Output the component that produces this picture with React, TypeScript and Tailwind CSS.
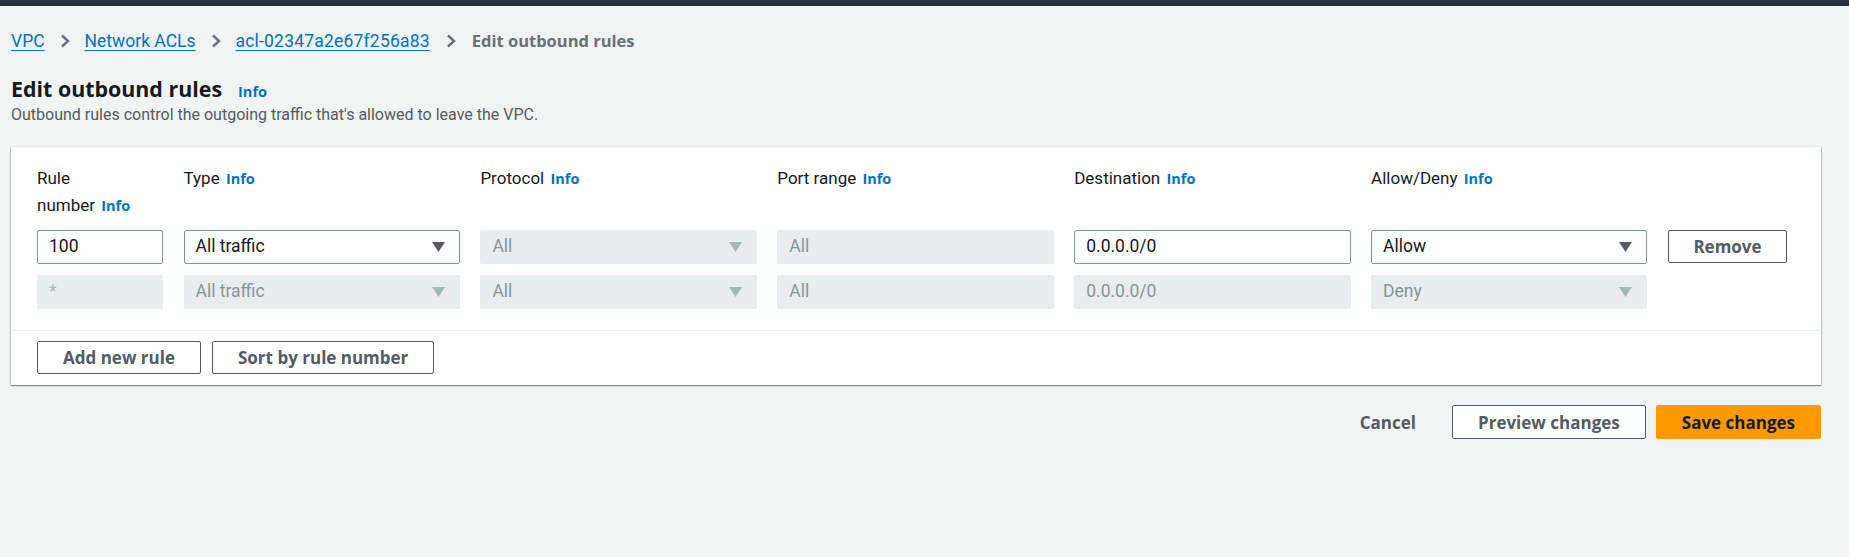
import React from "react";

const ROBOTO = "[font-family:Roboto,'Liberation_Sans',sans-serif]";

function Chevron({ className = "mx-[15px]" }: { className?: string }) {
  return (
    <svg width="10" height="14" viewBox="0 0 10 14" className={"shrink-0 " + className}>
      <path d="M2 1.5 L8 7 L2 12.5" fill="none" stroke="#687078" strokeWidth="2.4" strokeLinejoin="miter" />
    </svg>
  );
}

function Info({ className = "" }: { className?: string }) {
  return (
    <span className={"[font-family:'Open_Sans',sans-serif] font-bold text-[14.5px] text-[#0073bb] " + className}>
      Info
    </span>
  );
}

function Caret({ disabled }: { disabled?: boolean }) {
  return (
    <svg width="13" height="10" viewBox="0 0 13 10" className="shrink-0">
      <path d="M0 0 H13 L6.5 10 Z" fill={disabled ? "#aab7b8" : "#545b64"} />
    </svg>
  );
}

function Field({
  value,
  disabled,
  select,
  faint,
}: {
  value: string;
  disabled?: boolean;
  select?: boolean;
  faint?: boolean;
}) {
  return (
    <div
      className={
        "h-[34px] rounded-[2px] border flex items-center justify-between pl-[11px] pr-[14px] text-[17.5px] " +
        (disabled
          ? "bg-[#eaeded] border-[#eaeded] " + (faint ? "text-[#aab7b8]" : "text-[#879596]")
          : "bg-white border-[#879596] text-[#16191f]")
      }
    >
      <span className="leading-none">{value}</span>
      {select ? <Caret disabled={disabled} /> : null}
    </div>
  );
}

function Btn({ children, primary }: { children: React.ReactNode; primary?: boolean }) {
  return (
    <button
      className={
        "h-[33px] rounded-[2px] border px-[25px] [font-family:'Open_Sans',sans-serif] font-bold text-[17px] leading-none " +
        (primary
          ? "bg-[#ff9900] border-[#ff9900] text-[#16191f]"
          : "bg-white border-[#545b64] text-[#545b64]")
      }
    >
      {children}
    </button>
  );
}

function Label({ children }: { children: React.ReactNode }) {
  return <div className="text-[17px] leading-[27px] text-[#16191f]">{children}</div>;
}

export default function App() {
  return (
    <div className={"min-h-screen w-full bg-[#f2f3f3] " + ROBOTO}>
      <div className="h-[6px] bg-[#232f3e]" />
      <div className="pl-[11px] pr-[28px]">
        {/* Breadcrumb */}
        <nav className="mt-[23px] flex items-center h-[24px] text-[17.5px] leading-[24px]">
          <a className="text-[#0073bb] underline underline-offset-[3px] decoration-1">VPC</a>
          <Chevron />
          <a className="text-[#0073bb] underline underline-offset-[3px] decoration-1">Network ACLs</a>
          <Chevron />
          <a className="text-[#0073bb] underline underline-offset-[3px] decoration-1 tracking-[0.2px]">
            acl-02347a2e67f256a83
          </a>
          <Chevron className="ml-[16px] mr-[16px]" />
          <span className="[font-family:'Open_Sans',sans-serif] font-bold text-[16.5px] text-[#687078]">
            Edit outbound rules
          </span>
        </nav>

        {/* Header */}
        <div className="mt-[21px] flex items-baseline">
          <h1 className="[font-family:'Open_Sans',sans-serif] font-bold text-[21.4px] leading-[30px] text-[#16191f]">
            Edit outbound rules
          </h1>
          <Info className="ml-[16px]" />
        </div>
        <p className="mt-[1px] text-[16px] leading-[20px] text-[#545b64]">
          Outbound rules control the outgoing traffic that's allowed to leave the VPC.
        </p>

        {/* Card */}
        <div className="mt-[21px] bg-white border-t border-[#eaeded] shadow-[0_1px_1px_0_rgba(0,28,36,0.3),1px_1px_1px_0_rgba(0,28,36,0.15),-1px_1px_1px_0_rgba(0,28,36,0.15)]">
          <div className="pl-[26px] pr-[34px] pt-[18px] pb-[21px]">
            <div className="grid grid-cols-[126px_repeat(5,minmax(0,1fr))_119px] gap-x-[20.5px]">
              <Label>
                Rule
                <br />
                number <Info className="ml-[2px]" />
              </Label>
              <Label>
                Type <Info className="ml-[2px]" />
              </Label>
              <Label>
                Protocol <Info className="ml-[2px]" />
              </Label>
              <Label>
                Port range <Info className="ml-[2px]" />
              </Label>
              <Label>
                Destination <Info className="ml-[2px]" />
              </Label>
              <Label>
                Allow/Deny <Info className="ml-[2px]" />
              </Label>
              <div />
            </div>
            <div className="mt-[11px] grid grid-cols-[126px_repeat(5,minmax(0,1fr))_119px] gap-x-[20.5px] gap-y-[11px]">
              <Field value="100" />
              <Field value="All traffic" select />
              <Field value="All" select disabled />
              <Field value="All" disabled />
              <Field value="0.0.0.0/0" />
              <Field value="Allow" select />
              <div className="flex items-start">
                <button className="w-full h-[33px] rounded-[2px] border border-[#545b64] bg-white [font-family:'Open_Sans',sans-serif] font-bold text-[17px] leading-none text-[#545b64]">
                  Remove
                </button>
              </div>

              <Field value="*" disabled faint />
              <Field value="All traffic" select disabled />
              <Field value="All" select disabled />
              <Field value="All" disabled />
              <Field value="0.0.0.0/0" disabled />
              <Field value="Deny" select disabled />
              <div />
            </div>
          </div>
          <div className="border-t border-[#eaeded] pl-[26px] pt-[10px] pb-[11px] flex gap-[11px]">
            <Btn>Add new rule</Btn>
            <Btn>Sort by rule number</Btn>
          </div>
        </div>

        {/* Footer actions */}
        <div className="mt-[20px] flex justify-end items-center gap-[10px]">
          <button className="h-[34px] px-[26px] [font-family:'Open_Sans',sans-serif] font-bold text-[17px] leading-none text-[#545b64]">
            Cancel
          </button>
          <button className="h-[34px] rounded-[2px] border border-[#545b64] bg-white px-[25px] [font-family:'Open_Sans',sans-serif] font-bold text-[17px] leading-none text-[#545b64]">
            Preview changes
          </button>
          <button className="h-[34px] rounded-[2px] border border-[#ff9900] bg-[#ff9900] px-[25px] [font-family:'Open_Sans',sans-serif] font-bold text-[17px] leading-none text-[#16191f]">
            Save changes
          </button>
        </div>
      </div>
    </div>
  );
}
